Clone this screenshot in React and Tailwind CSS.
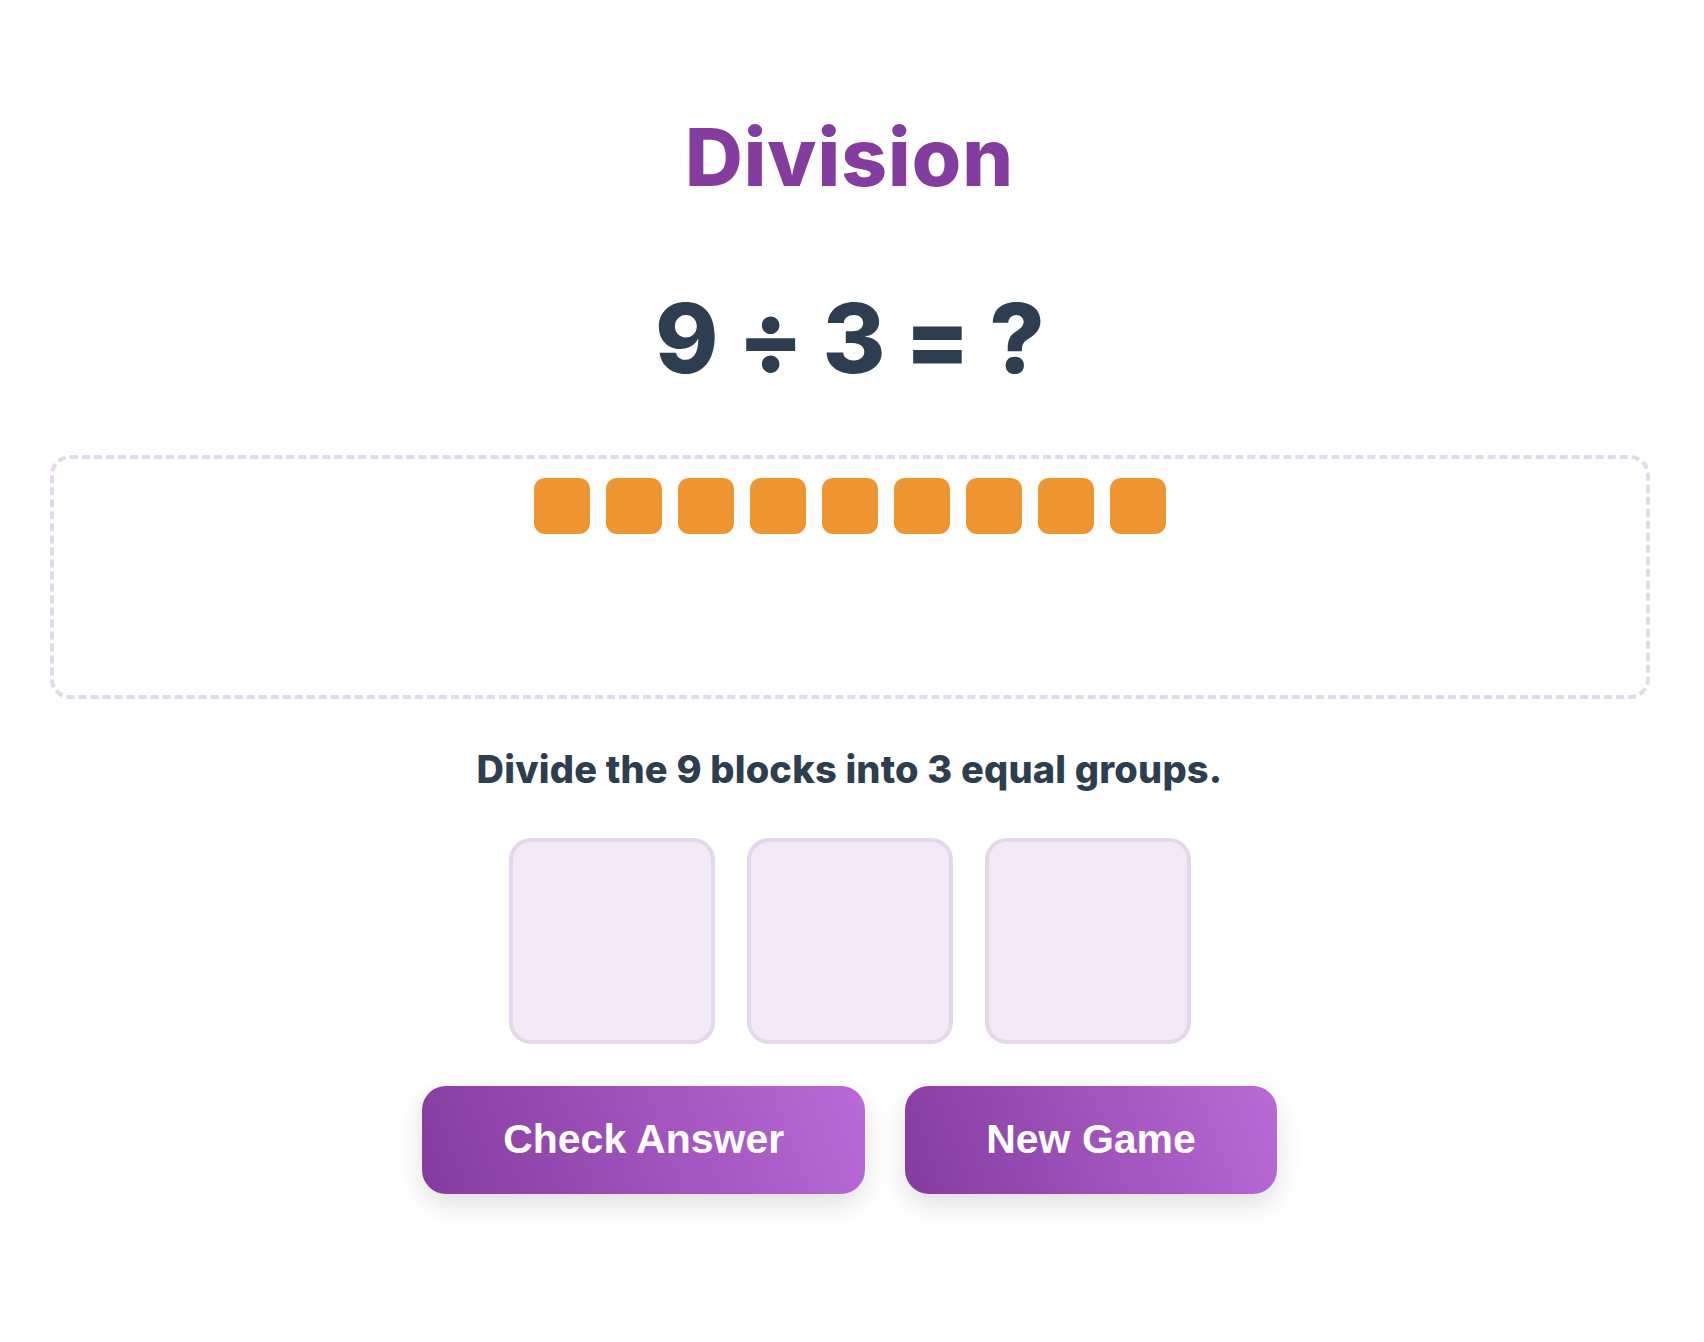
// App.jsx
const BLOCKS = Array.from({ length: 9 }, (_, i) => i);
const GROUPS = [0, 1, 2];

export default function App() {
  return (
    <div className="min-h-[1342px] w-full bg-white pr-[5px]" style={{ fontFamily: 'Inter, "Noto Sans", sans-serif' }}>
      <div className="mx-auto flex w-[1600px] flex-col items-center pt-[117px]">
        {/* Title */}
        <h1 className="text-[80px] leading-[80px] font-extrabold tracking-[1px] text-[#843c9e]">Division</h1>

        {/* Equation */}
        <div className="mt-[93px] text-[96px] leading-[96px] font-extrabold text-[#2c3e50] tracking-[-1px]">
          9 ÷ 3 = ?
        </div>

        {/* Block pool */}
        <div className="mt-[69px] h-[244px] w-full rounded-[20px] border-4 border-dashed border-[#e5d8ec] pt-[19px]">
          <div className="flex justify-center gap-4">
            {BLOCKS.map((b) => (
              <div key={b} className="h-14 w-14 rounded-[11px] bg-[#ee9430]" />
            ))}
          </div>
        </div>

        {/* Instruction */}
        <p className="mt-[51px] text-[38px] leading-[38px] font-extrabold tracking-[0.2px] text-[#2c3e50]">
          Divide the 9 blocks into 3 equal groups.
        </p>

        {/* Group slots */}
        <div className="mt-[50px] flex gap-8">
          {GROUPS.map((g) => (
            <div key={g} className="h-[206px] w-[206px] rounded-[22px] border-4 border-[#e5d6ec] bg-[#f3eaf8]" />
          ))}
        </div>

        {/* Buttons */}
        <div className="mt-[42px] flex gap-10" style={{ fontFamily: '"Liberation Sans", Arial, sans-serif' }}>
          <button className="flex h-[108px] items-center rounded-[24px] bg-linear-[70deg] from-[#843b9e] to-[#b96ad7] px-[81px] text-[41px] font-bold text-white shadow-[0_10px_28px_rgba(0,0,0,0.13)]">
            Check Answer
          </button>
          <button className="flex h-[108px] items-center rounded-[24px] bg-linear-[70deg] from-[#843b9e] to-[#b96ad7] px-[81px] text-[41px] font-bold text-white shadow-[0_10px_28px_rgba(0,0,0,0.13)]">
            New Game
          </button>
        </div>
      </div>
    </div>
  );
}
